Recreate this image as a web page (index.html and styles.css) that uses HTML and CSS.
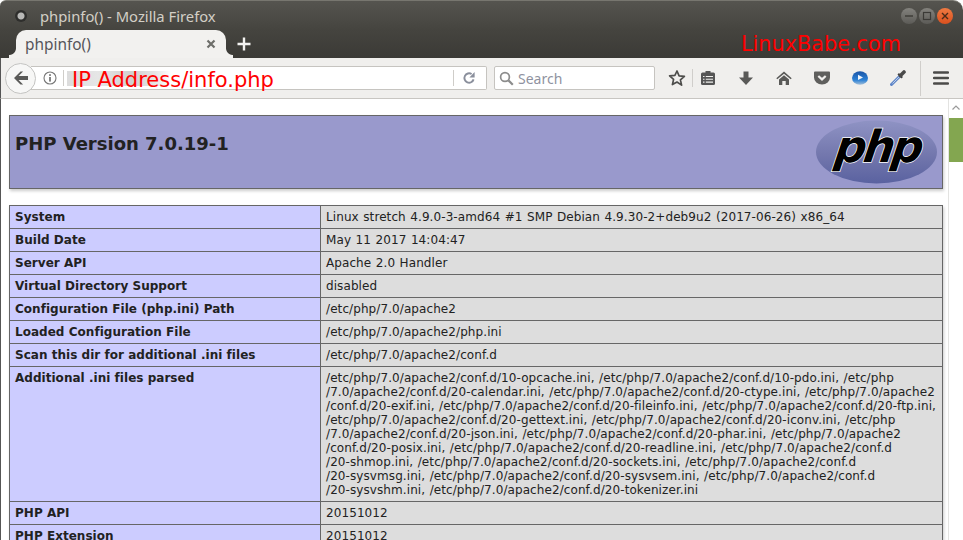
FILE: index.html
```html
<!DOCTYPE html>
<html lang="en">
<head>
<meta charset="utf-8">
<title>phpinfo()</title>
<link rel="stylesheet" href="styles.css">
</head>
<body>
<div class="window">
  <header class="titlebar">
    <span class="app-dot"></span>
    <span class="title">phpinfo() - Mozilla Firefox</span>
    <div class="win-buttons">
      <span class="win-btn"><svg viewBox="0 0 10 10" width="10" height="10"><path d="M1 5h8" stroke="#3b3a36" stroke-width="1.4"/></svg></span>
      <span class="win-btn"><svg viewBox="0 0 10 10" width="10" height="10"><rect x="1.5" y="1.5" width="7" height="7" fill="none" stroke="#3b3a36" stroke-width="1.2"/></svg></span>
      <span class="win-btn close"><svg viewBox="0 0 10 10" width="10" height="10"><path d="M2 2l6 6M8 2l-6 6" stroke="#4a2a18" stroke-width="1.4"/></svg></span>
    </div>
  </header>
  <div class="tabbar">
    <div class="tab">
      <span class="tab-title">phpinfo()</span>
      <svg class="tab-close" viewBox="0 0 10 10" width="10" height="10"><path d="M1.5 1.5l7 7M8.5 1.5l-7 7" stroke="#6e6e6a" stroke-width="2.2"/></svg>
    </div>
    <svg class="newtab" viewBox="0 0 14 14" width="14" height="14"><path d="M7 0.5v13M0.5 7h13" stroke="#f4f3f1" stroke-width="2.4"/></svg>
    <span class="brand">LinuxBabe.com</span>
  </div>
  <nav class="navbar">
    <div class="back"><svg viewBox="0 0 16 14" width="16" height="14"><path d="M7.5 0.5L1 7l6.5 6.500h2.600L5.600 9H15V5H5.600l4.500-4.500z" fill="#5a5a58"/></svg></div>
    <div class="urlbar">
      <svg class="info" viewBox="0 0 14 14" width="14" height="14"><circle cx="7" cy="7" r="6" fill="none" stroke="#777" stroke-width="1.1"/><rect x="6.2" y="6" width="1.6" height="4.6" fill="#666"/><rect x="6.2" y="3.2" width="1.6" height="1.7" fill="#666"/></svg>
      <span class="url-sep"></span>
      <span class="url-blur"></span>
      <span class="url-text">IP Address/info.php</span>
      <span class="url-sep end"></span>
      <svg class="reload" viewBox="0 0 14 14" width="14" height="14"><path d="M11.6 8.4A4.7 4.7 0 1 1 9.6 3" fill="none" stroke="#8a8f9c" stroke-width="1.9"/><path d="M7.4 6.4L12.6 6.4L12.6 1z" fill="#8a8f9c"/></svg>
    </div>
    <div class="searchbar">
      <svg viewBox="0 0 15 15" width="15" height="15"><circle cx="6" cy="6" r="4.4" fill="none" stroke="#8c8c8c" stroke-width="1.7"/><path d="M9.4 9.4l4.4 4.4" stroke="#8c8c8c" stroke-width="2.2"/></svg>
      <span class="search-text">Search</span>
    </div>
    <div class="tools">
      <svg class="star" viewBox="0 0 18 18" width="18" height="18"><path d="M9 2l2.100 4.900 5.300.5-4 3.500 1.200 5.200L9 13l-4.600 2.600 1.200-5.200-4-3.500 5.300-.5z" fill="none" stroke="#4d4d4b" stroke-width="1.700" stroke-linejoin="round"/></svg>
      <span class="tool-sep"></span>
      <div class="tool-group">
        <span class="tool-cell"><svg viewBox="0 0 16 16" width="16" height="16"><rect x="1" y="2.500" width="14" height="12.500" rx="1.500" fill="#555"/><rect x="5.500" y="1" width="5" height="3" fill="#555"/><path d="M3 6.500h1.500M5.800 6.500H13M3 9.300h1.500M5.800 9.300H13M3 12.100h1.500M5.800 12.100H13" stroke="#f0efed" stroke-width="1.100"/></svg></span>
        <span class="tool-cell"><svg viewBox="0 0 16 16" width="16" height="16"><path d="M5.500 1.500h5v6h4.500L8 15 1 7.500h4.500z" fill="#5a5a58"/></svg></span>
        <span class="tool-cell"><svg viewBox="0 0 16 16" width="16" height="16"><path d="M8 1.500L0.300 8.300 1.300 9.300 8 3.700l6.700 5.600 1-1z" fill="#5a5a58"/><path d="M3 9.500L8 5.200l5 4.300V15H9.700v-4H6.300v4H3z" fill="#5a5a58"/></svg></span>
        <span class="tool-cell"><svg viewBox="0 0 16 16" width="16" height="16"><path d="M1 1.500h14a1 1 0 0 1 1 1V7.500a8 7 0 0 1-16 0V2.500a1 1 0 0 1 1-1z" fill="#5f5f5d"/><path d="M4.300 6l3.700 3.400L11.700 6" fill="none" stroke="#f0efed" stroke-width="2.200"/></svg></span>
        <span class="tool-cell"><svg viewBox="0 0 16 16" width="16" height="16"><defs><linearGradient id="orb" x1="0" y1="0" x2="0" y2="1"><stop offset="0" stop-color="#1a54a6"/><stop offset="0.65" stop-color="#2d82d6"/><stop offset="1" stop-color="#a4bfd8"/></linearGradient></defs><ellipse cx="8" cy="8" rx="8" ry="6.800" fill="url(#orb)"/><path d="M6 4.800l5 2.700-5 2.500z" fill="#f2f6fb"/></svg></span>
        <span class="tool-cell"><svg viewBox="0 0 16 16" width="16" height="16"><path d="M1.500 14.500L9.500 6.500" stroke="#5f86c8" stroke-width="3" stroke-linecap="round"/><path d="M2.500 13.500L9 7" stroke="#b9cdea" stroke-width="1"/><path d="M8.200 3.800l4 4" stroke="#3f3f3f" stroke-width="2"/><path d="M10.500 5.500l3.500-3.500" stroke="#4a4a4a" stroke-width="3.600" stroke-linecap="round"/></svg></span>
      </div>
      <span class="tool-sep long"></span>
      <svg class="menu" viewBox="0 0 16 14" width="16" height="14"><path d="M1 1.500h14M1 7h14M1 12.500h14" stroke="#4b4b49" stroke-width="2.300" stroke-linecap="round"/></svg>
    </div>
  </nav>
  <div class="viewport">
    <main class="page">
      <div class="php-head">
        <h1>PHP Version 7.0.19-1</h1>
        <svg class="php-logo" viewBox="0 0 122 64" width="122" height="64">
          <defs><linearGradient id="logo" x1="0" y1="0" x2="0" y2="1"><stop offset="0" stop-color="#8f93c4"/><stop offset="0.55" stop-color="#7377ad"/><stop offset="1" stop-color="#5a62a0"/></linearGradient></defs>
          <ellipse cx="60.500" cy="32" rx="60.500" ry="31.500" fill="url(#logo)"/>
          <text class="php-word" x="66" y="42" text-anchor="middle" transform="skewX(-8)">php</text>
        </svg>
      </div>
      <table class="info-table">
        <tr><th>System</th><td>Linux stretch 4.9.0-3-amd64 #1 SMP Debian 4.9.30-2+deb9u2 (2017-06-26) x86_64</td></tr>
        <tr><th>Build Date</th><td>May 11 2017 14:04:47</td></tr>
        <tr><th>Server API</th><td>Apache 2.0 Handler</td></tr>
        <tr><th>Virtual Directory Support</th><td>disabled</td></tr>
        <tr><th>Configuration File (php.ini) Path</th><td>/etc/php/7.0/apache2</td></tr>
        <tr><th>Loaded Configuration File</th><td>/etc/php/7.0/apache2/php.ini</td></tr>
        <tr><th>Scan this dir for additional .ini files</th><td>/etc/php/7.0/apache2/conf.d</td></tr>
        <tr><th>Additional .ini files parsed</th><td>/etc/php/7.0/apache2/conf.d/10-opcache.ini, /etc/php/7.0/apache2/conf.d/10-pdo.ini, /etc/php<br>/7.0/apache2/conf.d/20-calendar.ini, /etc/php/7.0/apache2/conf.d/20-ctype.ini, /etc/php/7.0/apache2<br>/conf.d/20-exif.ini, /etc/php/7.0/apache2/conf.d/20-fileinfo.ini, /etc/php/7.0/apache2/conf.d/20-ftp.ini,<br>/etc/php/7.0/apache2/conf.d/20-gettext.ini, /etc/php/7.0/apache2/conf.d/20-iconv.ini, /etc/php<br>/7.0/apache2/conf.d/20-json.ini, /etc/php/7.0/apache2/conf.d/20-phar.ini, /etc/php/7.0/apache2<br>/conf.d/20-posix.ini, /etc/php/7.0/apache2/conf.d/20-readline.ini, /etc/php/7.0/apache2/conf.d<br>/20-shmop.ini, /etc/php/7.0/apache2/conf.d/20-sockets.ini, /etc/php/7.0/apache2/conf.d<br>/20-sysvmsg.ini, /etc/php/7.0/apache2/conf.d/20-sysvsem.ini, /etc/php/7.0/apache2/conf.d<br>/20-sysvshm.ini, /etc/php/7.0/apache2/conf.d/20-tokenizer.ini</td></tr>
        <tr><th>PHP API</th><td>20151012</td></tr>
        <tr><th>PHP Extension</th><td>20151012</td></tr>
      </table>
    </main>
    <aside class="scrollbar">
      <svg class="scroll-up" viewBox="0 0 8 5" width="8" height="5"><path d="M0.500 4.500L4 1l3.500 3.500" fill="none" stroke="#9a9a9a" stroke-width="1.200"/></svg>
      <div class="thumb"></div>
    </aside>
  </div>
</div>
</body>
</html>
```
FILE: styles.css
```css
* { box-sizing: border-box; }
html, body { margin: 0; padding: 0; height: 100%; overflow: hidden; background: #fff; }
body { font-family: "Noto Sans", "Open Sans", sans-serif; }
.window { width: 963px; height: 540px; display: flex; flex-direction: column; overflow: hidden; }

.titlebar { height: 30px; flex: none; display: flex; align-items: center; padding: 0 10px 0 15px; background: linear-gradient(#55544f, #45443f); border-top: 1px solid #77766f; border-radius: 6px 10px 0 0; color: #d8d5cd; }
.app-dot { width: 12px; height: 12px; border-radius: 50%; background: radial-gradient(circle, #b8b8b6 0 3px, #2e2e2c 4px); margin-right: 13px; }
.title { font-size: 14.800px; color: #d3cfc6; }
.win-buttons { margin-left: auto; display: flex; gap: 2px; }
.win-btn { width: 16px; height: 16px; border-radius: 50%; background: linear-gradient(#83827d, #5c5b57); display: flex; align-items: center; justify-content: center; }
.close { background: linear-gradient(#ef7a42, #d9501e); }

.tabbar { height: 28px; flex: none; display: flex; align-items: center; background: linear-gradient(#45443f, #3b3a36); }
.tab { width: 210px; height: 28px; margin-left: 16px; background: #f2f1ef; border-radius: 10px 10px 0 0; display: flex; align-items: center; padding: 0 10px 0 9px; position: relative; flex: none; }
.tab::before, .tab::after { content: ""; position: absolute; bottom: 0; width: 7px; height: 10px; }
.tab::before { left: -7px; background: radial-gradient(circle at 0 0, transparent 6.500px, #f2f1ef 7.500px); }
.tab::after { right: -7px; background: radial-gradient(circle at 100% 0, transparent 6.500px, #f2f1ef 7.500px); }
.tab-title { font-size: 15.400px; color: #55555a; }
.tab-close { margin-left: auto; }
.newtab { margin-left: 11px; }
.brand { margin-left: auto; margin-right: 62px; font-family: "DejaVu Sans", sans-serif; font-size: 20.800px; color: #ff0000; }

.navbar { height: 41px; flex: none; display: flex; align-items: center; background: #f0efed; border-bottom: 1px solid #c8c6c2; border-left: 1px solid #555; padding-left: 4px; }
.back { width: 31px; height: 31px; border-radius: 50%; border: 1px solid #c4c4c2; background: #f7f7f6; display: flex; align-items: center; justify-content: center; margin-right: -5px; position: relative; z-index: 1; flex: none; }
.urlbar { width: 456px; height: 24px; background: #fff; border: 1px solid #c6c4c0; border-left: none; border-radius: 0 2px 2px 0; display: flex; align-items: center; padding-left: 12px; position: relative; flex: none; }
.url-sep { width: 1px; height: 16px; background: #cfcdc9; margin-left: 6px; flex: none; }
.url-blur { width: 104px; height: 15px; background: linear-gradient(90deg, #dcdcdc, #e6e6e6 30%, #d0d0d0 62%, #e6e6e6 85%, #fff); position: absolute; left: 36px; top: 4px; }
.url-text { font-family: "DejaVu Sans", sans-serif; font-size: 21px; color: #ff0000; margin-left: 8px; padding-top: 3px; position: relative; white-space: nowrap; }
.url-sep.end { margin-left: auto; }
.reload { margin: 0 10px 0 8px; flex: none; }
.searchbar { width: 161px; height: 24px; margin-left: 7px; background: #fff; border: 1px solid #c6c4c0; border-radius: 2px; display: flex; align-items: center; padding-left: 4px; gap: 4px; flex: none; }
.search-text { font-size: 14px; color: #8f92a0; }
.tools { flex: 1; display: flex; align-items: center; padding-left: 13px; height: 100%; }
.star { flex: none; }
.tool-sep { width: 1px; height: 18px; background: #d0cecb; margin-left: 6px; flex: none; }
.tool-group { display: flex; gap: 8px; flex: none; }
.tool-cell { width: 30px; height: 16px; display: flex; justify-content: center; }
.tool-sep.long { height: 35px; margin: 0 12px 0 7px; }
.menu { flex: none; }

.viewport { flex: 1; min-height: 0; display: flex; border-left: 1px solid #555; background: #fff; }
.page { flex: 1; min-width: 0; padding: 16px 5px 0 8px; overflow: hidden; font-family: "DejaVu Sans", sans-serif; color: #222; }
.php-head { height: 74px; background: #9999cc; border: 1px solid #666; box-shadow: 1px 2px 3px #ccc; display: flex; justify-content: space-between; padding: 4px 4px 0 5px; margin-bottom: 16px; width: 934px; }
.php-head h1 { margin: 0; font-size: 18px; font-weight: bold; line-height: 47px; height: 47px; }
.php-logo { flex: none; }
.php-word { font-family: "DejaVu Sans", sans-serif; font-size: 44px; font-weight: bold; font-style: italic; fill: #000; stroke: #fff; stroke-width: 1.500px; paint-order: stroke; letter-spacing: -3px; }

.info-table { width: 934px; border-collapse: collapse; table-layout: fixed; font-size: 12px; box-shadow: 1px 2px 3px #ccc; }
.info-table th, .info-table td { border: 1px solid #666; padding: 4px 5px; vertical-align: top; line-height: 14px; text-align: left; }
.info-table th { width: 311px; background: #ccccff; font-weight: bold; letter-spacing: 0.030px; }
.info-table td { background: #dddddd; letter-spacing: 0.085px; word-spacing: 0.600px; }

.scrollbar { width: 15px; flex: none; background: #fff; border-left: 1px solid #e3e3e1; display: flex; flex-direction: column; align-items: center; }
.scroll-up { margin: 6px 0 8px; flex: none; }
.thumb { width: 100%; height: 44px; background: #83a650; }
```
